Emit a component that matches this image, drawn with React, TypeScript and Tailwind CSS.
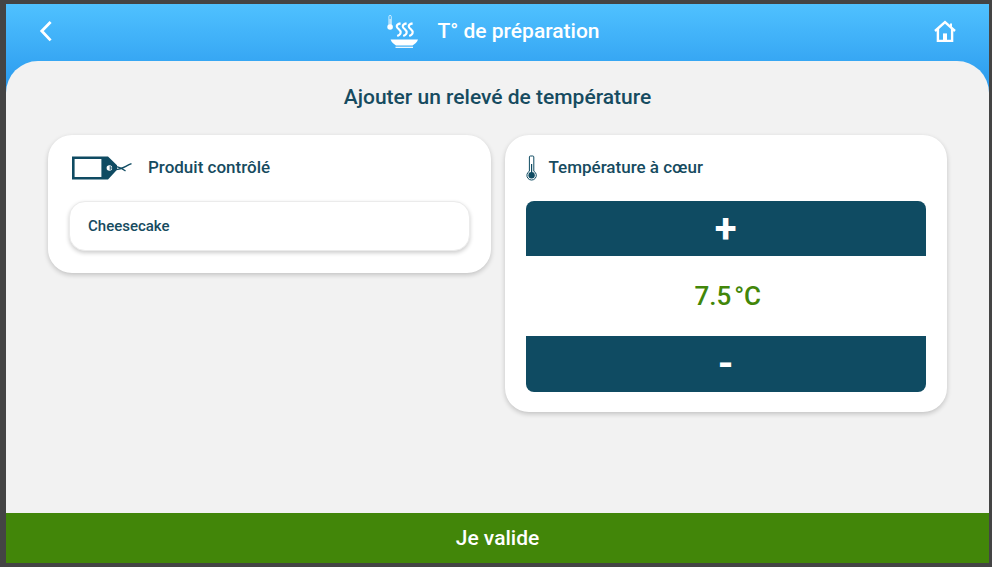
import { useState } from "react";
import type { ReactNode } from "react";

function ChevronIcon() {
  return (
    <svg className="h-6 w-4" viewBox="0 0 16 24" fill="none" stroke="white" strokeWidth="2.8" aria-hidden="true">
      <path d="M12.6 3 L3.8 12 L12.6 21.4" />
    </svg>
  );
}

function HomeIcon() {
  return (
    <svg className="size-6" viewBox="0 0 24 24" fill="none" stroke="white" aria-hidden="true">
      <path d="M2 12 L12 3 L22 12" strokeWidth="2.4" />
      <path d="M4.9 10 V21.9 H19.1 V10" strokeWidth="2.4" />
      <path d="M18 4.6 V8" strokeWidth="2" />
      <path d="M10 22 V14.4 H14 V22 Z" fill="white" stroke="none" />
    </svg>
  );
}

function HotDishIcon() {
  return (
    <svg className="h-9 w-8" viewBox="0 0 32 36" fill="none" stroke="white" aria-hidden="true">
      <path d="M1.9 11 V2.6 a1.2 1.2 0 0 1 2.4 0 V11" strokeWidth="0.7" />
      <path d="M3.1 5 V13" strokeWidth="1" />
      <circle cx="3.1" cy="13" r="2.8" fill="white" stroke="none" />
      <path d="M13.6 9.4 C8 10.6 9.4 13.6 12 15.4 C14.4 17.4 14.6 20.4 10.2 22" strokeWidth="2.1" />
      <path d="M19.6 9.4 C14 10.6 15.4 13.6 18 15.4 C20.4 17.4 20.6 20.4 16.2 22" strokeWidth="2.1" />
      <path d="M25.6 9.4 C20 10.6 21.4 13.6 24 15.4 C26.4 17.4 26.6 20.4 22.2 22" strokeWidth="2.1" />
      <path d="M3.6 25.6 H31 C30 28.5 28 30 25.5 31.6 H9 C6.6 30 4.6 28.5 3.6 25.6 Z" fill="white" stroke="none" />
      <path d="M8.5 33.3 H26" strokeWidth="1.2" />
    </svg>
  );
}

function TagIcon() {
  return (
    <svg className="h-6 w-15" viewBox="0 0 60 24" fill="none" aria-hidden="true">
      <path
        fillRule="evenodd"
        fill="#0f4b62"
        d="M0 0.6 H36 L45 9.2 V13.8 L36 23.4 H0 Z M2.6 3 V21 H29.4 V3 Z"
      />
      <circle cx="37.4" cy="12" r="2.8" fill="white" />
      <path d="M38.2 10 V14 M38.2 12 H43" stroke="#0f4b62" strokeWidth="0.9" />
      <path d="M42 10.4 C47 10.2 49.5 12.4 53.5 15" stroke="#0f4b62" strokeWidth="1.4" />
      <path d="M42 13.4 C49 14.4 53 10 59.5 7.6" stroke="#0f4b62" strokeWidth="1.4" />
    </svg>
  );
}

function ThermometerIcon() {
  return (
    <svg className="h-7 w-3" viewBox="0 0 12 28" fill="none" stroke="#0f4b62" aria-hidden="true">
      <path d="M3.4 17.2 V3 a1 1 0 0 1 1 -1 H6.8 a1 1 0 0 1 1 1 V17.2 a4.7 4.7 0 1 1 -4.4 0 Z" strokeWidth="1" />
      <path d="M5.6 10 V19" strokeWidth="1.2" />
      <circle cx="5.6" cy="21.3" r="3.2" fill="#0f4b62" stroke="none" />
    </svg>
  );
}

function Card({ children }: { children: ReactNode }) {
  return (
    <section className="flex-1 rounded-3xl bg-white px-[21px] pt-4 pb-5 shadow-[0_2px_5px_rgba(0,0,0,0.2)]">
      {children}
    </section>
  );
}

export default function App() {
  const [product, setProduct] = useState("Cheesecake");
  const [temperature, setTemperature] = useState(7.5);

  return (
    <div className="flex min-h-screen flex-col bg-[#444444] pt-1 pr-[3px] pb-1 pl-[6px] font-[Roboto,sans-serif] font-medium text-[#164b60]">
      <header className="flex h-[89px] items-start justify-between bg-linear-to-b from-[#4fc1ff] to-[#2898ed] px-8 pb-8 text-white">
        <button type="button" aria-label="Retour" className="flex h-[53px] w-6 items-center justify-start">
          <ChevronIcon />
        </button>
        <div className="flex h-14 items-center gap-[18px] pr-2">
          <HotDishIcon />
          <h1 className="text-[21px]">T° de préparation</h1>
        </div>
        <button type="button" aria-label="Accueil" className="flex h-[53px] w-6 items-center justify-end">
          <HomeIcon />
        </button>
      </header>

      <main className="-mt-8 flex-1 rounded-t-[32px] bg-[#f2f2f2] px-[42px] pt-5">
        <h2 className="text-center text-[21px] leading-8">Ajouter un relevé de température</h2>
        <div className="mt-[22px] flex items-start gap-3.5">
          <Card>
            <div className="flex h-[34px] items-center gap-4 pl-[3px]">
              <TagIcon />
              <label htmlFor="product" className="text-[17px]">Produit contrôlé</label>
            </div>
            <input
              id="product"
              type="text"
              value={product}
              onChange={(e) => setProduct(e.target.value)}
              className="mt-4 mb-0.5 block h-[50px] w-full rounded-2xl border border-[#ebebeb] bg-white px-[18px] text-[15px] shadow-[0_2px_4px_rgba(0,0,0,0.2)] outline-none"
            />
          </Card>

          <Card>
            <div className="flex h-[34px] items-center gap-[11px]">
              <ThermometerIcon />
              <h3 className="text-[17px]">Température à cœur</h3>
            </div>
            <button
              type="button"
              aria-label="Augmenter la température"
              onClick={() => setTemperature((t) => t + 0.5)}
              className="mt-4 flex h-[55px] w-full items-center justify-center rounded-t-lg bg-[#0f4b62] text-[40px] font-bold text-white"
            >
              +
            </button>
            <output className="flex h-20 items-center justify-center gap-[3px] pl-1 text-[26px] text-[#428609]">
              <span>{temperature.toFixed(1)}</span>
              <span>°C</span>
            </output>
            <button
              type="button"
              aria-label="Diminuer la température"
              onClick={() => setTemperature((t) => t - 0.5)}
              className="flex h-14 w-full items-center justify-center rounded-b-lg bg-[#0f4b62] text-[40px] font-bold text-white"
            >
              -
            </button>
          </Card>
        </div>
      </main>

      <button type="button" className="h-[50px] bg-[#428609] pt-0.5 text-[21px] text-white">
        Je valide
      </button>
    </div>
  );
}
